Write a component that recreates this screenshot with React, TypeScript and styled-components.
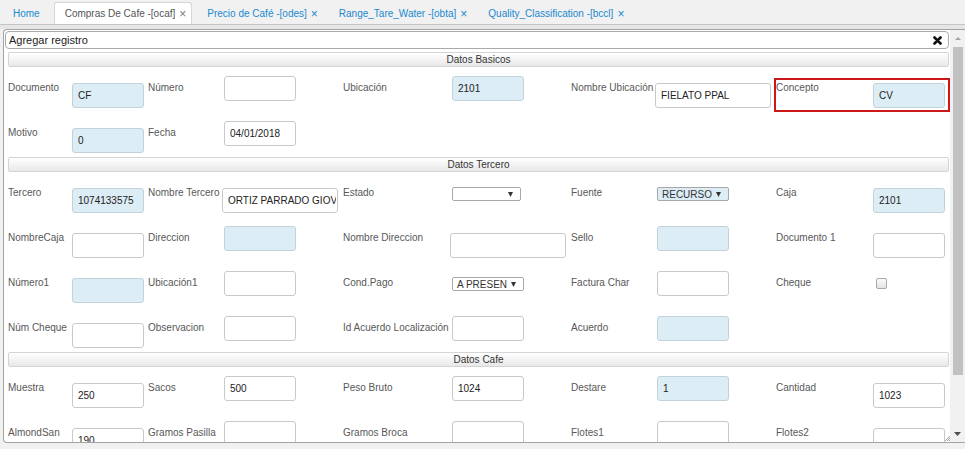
import React from "react";
import styled, { createGlobalStyle, css } from "styled-components";

const Global = createGlobalStyle`
  html, body { margin: 0; padding: 0; background: #f1f1f1; }
  body { font-family: "Liberation Sans", Arial, sans-serif; overflow: hidden; }
  #root { width: 965px; height: 449px; overflow: hidden; }
`;

const TabBar = styled.div`
  display: flex;
  align-items: flex-end;
  height: 24px;
  padding-left: 2px;
  background: #f1f1f1;
  border-bottom: 1px solid #c4c4c4;
`;

const Tab = styled.div<{ $active?: boolean; $home?: boolean }>`
  display: flex;
  align-items: center;
  height: 22px;
  box-sizing: border-box;
  padding: 0 ${(p) => (p.$home ? "10px" : "5px")} 0 10px;
  margin-right: ${(p) => (p.$home ? "3px" : "4px")};
  font-size: 10px;
  color: #2089d0;
  border: 1px solid transparent;
  border-bottom: none;
  border-radius: 3px 3px 0 0;
  white-space: nowrap;
  ${(p) =>
    p.$active &&
    css`
      background: #fff;
      border-color: #d6d6d6;
      color: #555;
    `}
`;

const TabClose = styled.span<{ $active?: boolean }>`
  margin-left: 4px;
  font-size: 12px;
  line-height: 10px;
  color: ${(p) => (p.$active ? "#7a7a7a" : "#2089d0")};
`;

const Strip = styled.div`
  height: 4px;
  background: #e6e6e6;
`;

const Dialog = styled.div`
  display: flex;
  margin-left: 3px;
  width: 962px;
  height: 414px;
  box-sizing: border-box;
  border: 1px solid #a3a3a3;
  border-right: none;
  border-radius: 4px 0 0 4px;
  background: #fff;
  overflow: hidden;
`;

const Content = styled.div`
  position: relative;
  flex: 1;
  min-width: 0;
  padding: 1px 1px 0 1px;
  overflow: hidden;
`;

const TitleBar = styled.div`
  display: flex;
  align-items: center;
  justify-content: space-between;
  height: 18px;
  box-sizing: border-box;
  padding: 0 6px 0 3px;
  border: 1px solid #a9a9a9;
  border-radius: 4px;
  font-size: 11px;
  color: #222;
`;

const Form = styled.div`
  padding: 3px 0 0 3px;
`;

const SectionHeader = styled.div`
  height: 15px;
  box-sizing: border-box;
  border: 1px solid #d4d4d4;
  border-radius: 2px;
  background: linear-gradient(#ffffff, #e8e8e8);
  font-size: 10px;
  line-height: 13px;
  color: #333;
  text-align: center;
`;

const SectionBody = styled.div`
  display: grid;
  grid-template-columns: 64px 76px 76px 119px 109px 119px 86px 119px 97px 72px;
  grid-auto-rows: 32px;
  row-gap: 13px;
  align-items: start;
  padding: 9px 0 4px;
`;

const Label = styled.div<{ $mark?: boolean }>`
  position: relative;
  padding-top: 6px;
  font-size: 10px;
  line-height: 12px;
  color: #585858;
  white-space: nowrap;
  ${(p) =>
    p.$mark &&
    css`
      &::after {
        content: "";
        position: absolute;
        left: -2px;
        top: 2px;
        width: 176px;
        height: 34px;
        box-sizing: border-box;
        border: 2px solid #cc1818;
        pointer-events: none;
      }
    `}
`;

const Field = styled.input<{ $blue?: boolean; $low?: boolean; $wide?: boolean }>`
  display: block;
  width: ${(p) => (p.$wide ? "116px" : "72px")};
  height: 25px;
  box-sizing: border-box;
  margin: ${(p) => (p.$low ? "7px" : "0")} 0 0 ${(p) => (p.$wide ? "-2px" : "0")};
  padding: 0 1px 0 5px;
  border: 1px solid ${(p) => (p.$blue ? "#c2d2db" : "#c9c9c9")};
  border-radius: 3px;
  background: ${(p) => (p.$blue ? "#dcedf5" : "#fff")};
  font-family: "Liberation Sans", Arial, sans-serif;
  font-size: 10px;
  color: #222;
  outline: none;
`;

const SelectBox = styled.div<{ $blue?: boolean; $w: number }>`
  display: flex;
  align-items: center;
  justify-content: space-between;
  width: ${(p) => p.$w}px;
  height: 14px;
  box-sizing: border-box;
  margin-top: 6px;
  padding: 0 7px 0 4px;
  border: 1px solid #a8a8a8;
  border-radius: 2px;
  background: ${(p) => (p.$blue ? "#dcedf5" : "#fff")};
  font-size: 10px;
  color: #333;
  white-space: nowrap;
`;

const Check = styled.div`
  width: 11px;
  height: 11px;
  box-sizing: border-box;
  margin: 7px 0 0 3px;
  border: 1px solid #a8a8a8;
  border-radius: 2px;
  background: linear-gradient(#fafafa, #e4e4e4);
`;

const Scroll = styled.div`
  display: flex;
  flex-direction: column;
  align-items: center;
  width: 15px;
  flex-shrink: 0;
  background: #f1f1f1;
`;

const ArrowBox = styled.div`
  display: flex;
  align-items: center;
  justify-content: center;
  height: 17px;
  width: 100%;
`;

const Thumb = styled.div`
  width: 10px;
  height: 328px;
  background: #c1c1c1;
`;

const Spacer = styled.div`
  flex: 1;
`;

const Grip = styled.svg`
  position: absolute;
  right: 0;
  bottom: 1px;
`;

type F =
  | { label: string; kind: "input"; value?: string; blue?: boolean; low?: boolean; wide?: boolean; mark?: boolean }
  | { label: string; kind: "select"; value: string; blue?: boolean; w: number }
  | { label: string; kind: "check" }
  | null;

const basicos: F[][] = [
  [
    { label: "Documento", kind: "input", value: "CF", blue: true, low: true },
    { label: "Número", kind: "input" },
    { label: "Ubicación", kind: "input", value: "2101", blue: true },
    { label: "Nombre Ubicación", kind: "input", value: "FIELATO PPAL", low: true, wide: true },
    { label: "Concepto", kind: "input", value: "CV", blue: true, low: true, mark: true },
  ],
  [
    { label: "Motivo", kind: "input", value: "0", blue: true, low: true },
    { label: "Fecha", kind: "input", value: "04/01/2018" },
    null,
    null,
    null,
  ],
];

const tercero: F[][] = [
  [
    { label: "Tercero", kind: "input", value: "1074133575", blue: true, low: true },
    { label: "Nombre Tercero", kind: "input", value: "ORTIZ PARRADO GIOVANNI", low: true, wide: true },
    { label: "Estado", kind: "select", value: "", w: 69 },
    { label: "Fuente", kind: "select", value: "RECURSO", blue: true, w: 72 },
    { label: "Caja", kind: "input", value: "2101", blue: true, low: true },
  ],
  [
    { label: "NombreCaja", kind: "input", low: true },
    { label: "Direccion", kind: "input", blue: true },
    { label: "Nombre Direccion", kind: "input", low: true, wide: true },
    { label: "Sello", kind: "input", blue: true },
    { label: "Documento 1", kind: "input", low: true },
  ],
  [
    { label: "Número1", kind: "input", blue: true, low: true },
    { label: "Ubicación1", kind: "input" },
    { label: "Cond.Pago", kind: "select", value: "A PRESEN", w: 72 },
    { label: "Factura Char", kind: "input" },
    { label: "Cheque", kind: "check" },
  ],
  [
    { label: "Núm Cheque", kind: "input", low: true },
    { label: "Observacion", kind: "input" },
    { label: "Id Acuerdo Localización", kind: "input" },
    { label: "Acuerdo", kind: "input", blue: true },
    null,
  ],
];

const cafe: F[][] = [
  [
    { label: "Muestra", kind: "input", value: "250", low: true },
    { label: "Sacos", kind: "input", value: "500" },
    { label: "Peso Bruto", kind: "input", value: "1024" },
    { label: "Destare", kind: "input", value: "1", blue: true },
    { label: "Cantidad", kind: "input", value: "1023", low: true },
  ],
  [
    { label: "AlmondSan", kind: "input", value: "190", low: true },
    { label: "Gramos Pasilla", kind: "input" },
    { label: "Gramos Broca", kind: "input" },
    { label: "Flotes1", kind: "input" },
    { label: "Flotes2", kind: "input", low: true },
  ],
];

const Triangle = ({ color = "#333", up = false, w = 5, h = 5 }: { color?: string; up?: boolean; w?: number; h?: number }) => (
  <svg width={w} height={h} viewBox={`0 0 ${w} ${h}`}>
    <polygon points={up ? `0,${h} ${w},${h} ${w / 2},0` : `0,0 ${w},0 ${w / 2},${h}`} fill={color} />
  </svg>
);

function renderField(f: F, key: string) {
  if (!f) return [<div key={key + "l"} />, <div key={key + "i"} />];
  const label = (
    <Label key={key + "l"} $mark={f.kind === "input" && !!f.mark}>
      {f.label}
    </Label>
  );
  let ctrl: React.ReactNode;
  if (f.kind === "input") {
    ctrl = (
      <div key={key + "i"}>
        <Field readOnly defaultValue={f.value ?? ""} $blue={f.blue} $low={f.low} $wide={f.wide} />
      </div>
    );
  } else if (f.kind === "select") {
    ctrl = (
      <div key={key + "i"}>
        <SelectBox $blue={f.blue} $w={f.w}>
          <span>{f.value}</span>
          <Triangle />
        </SelectBox>
      </div>
    );
  } else {
    ctrl = (
      <div key={key + "i"}>
        <Check />
      </div>
    );
  }
  return [label, ctrl];
}

const Section = ({ title, rows }: { title: string; rows: F[][] }) => (
  <>
    <SectionHeader>{title}</SectionHeader>
    <SectionBody>{rows.flatMap((r, ri) => r.flatMap((f, ci) => renderField(f, `${ri}-${ci}`)))}</SectionBody>
  </>
);

export default function App() {
  return (
    <>
      <Global />
      <TabBar>
        <Tab $home>Home</Tab>
        <Tab $active>
          Compras De Cafe -[ocaf]<TabClose $active>×</TabClose>
        </Tab>
        <Tab>
          Precio de Café -[odes]<TabClose>×</TabClose>
        </Tab>
        <Tab>
          Range_Tare_Water -[obta]<TabClose>×</TabClose>
        </Tab>
        <Tab>
          Quality_Classification -[bccl]<TabClose>×</TabClose>
        </Tab>
      </TabBar>
      <Strip />
      <Dialog>
        <Content>
          <TitleBar>
            <span>Agregar registro</span>
            <svg width="9" height="9" viewBox="0 0 9 9">
              <path d="M1.5 1.5 L7.5 7.5 M7.5 1.5 L1.5 7.5" stroke="#111" strokeWidth="2.6" strokeLinecap="round" />
            </svg>
          </TitleBar>
          <Form>
            <Section title="Datos Basicos" rows={basicos} />
            <Section title="Datos Tercero" rows={tercero} />
            <Section title="Datos Cafe" rows={cafe} />
          </Form>
          <Grip width="5" height="5" viewBox="0 0 5 5">
            <path d="M0 5 L5 0 M2 5 L5 2 M4 5 L5 4" stroke="#888" strokeWidth="0.8" />
          </Grip>
        </Content>
        <Scroll>
          <ArrowBox>
            <Triangle up color="#a3a3a3" w={6} h={3} />
          </ArrowBox>
          <Thumb />
          <Spacer />
          <ArrowBox>
            <Triangle color="#505050" w={7} h={4} />
          </ArrowBox>
        </Scroll>
      </Dialog>
    </>
  );
}
